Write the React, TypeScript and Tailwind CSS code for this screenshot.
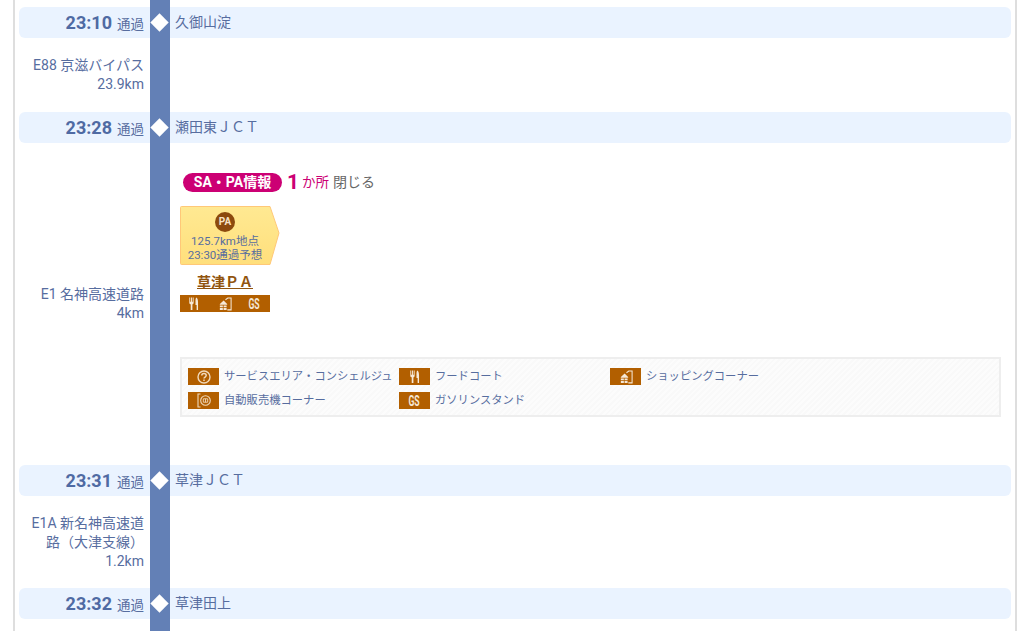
const FONT = 'font-["Roboto","Noto_Sans_CJK_JP",sans-serif]';

function Fork({ x = 0 }: { x?: number }) {
  return (
    <g transform={`translate(${x} 0)`} fill="#f6e9d8">
      <path d="M0 1.500h1v4.500h.8V1.500h1v4.500h.8V1.500h1v5.900c0 .8-.6 1.200-1.300 1.400V15H1.500V8.800C.6 8.600 0 8.200 0 7.400z" />
      <path d="M7.500 1.500c1.300.6 1.800 2.500 1.800 5.500v8H7.800V9.500H6.600V5c0-1.600.3-2.900.9-3.500z" />
    </g>
  );
}

function Shop({ x = 0 }: { x?: number }) {
  return (
    <g transform={`translate(${x} 0)`}>
      <path d="M7.500 4 10 2.200h3.500V14.800H9.500" fill="none" stroke="#f6e9d8" strokeWidth="1.100" />
      <path d="M1.500 8.500 5.500 4.800 9.300 8.500v.9H1.500z" fill="#f6e9d8" />
      <path d="M1.500 10h3.200v2.100H1.500zM5.500 10h3.200v2.100H5.500zM1.500 12.800h3.200V15H1.500zM5.500 12.800h3.200V15H5.500z" fill="#f6e9d8" />
    </g>
  );
}

function BoxIcon({ children }: { children: React.ReactNode }) {
  return (
    <span className="flex h-[17px] w-[31px] shrink-0 items-center justify-center bg-[#b25f00]">
      {children}
    </span>
  );
}

function Gs() {
  return (
    <span className={`${FONT} inline-block scale-x-[0.62] text-[14px] font-bold leading-none text-[#f4e7d6]`}>GS</span>
  );
}

const legend: { label: string; icon: React.ReactNode }[] = [
  {
    label: "サービスエリア・コンシェルジュ",
    icon: (
      <svg width="14" height="14" viewBox="0 0 14 14" fill="none" stroke="#f0d9bb">
        <circle cx="7" cy="7" r="6" strokeWidth="1.400" />
        <path d="M4.800 5.600c0-2.800 4.400-2.800 4.400 0 0 1.500-2.200 1.500-2.200 3" strokeWidth="1.500" />
        <path d="M7 9.400v1.500" strokeWidth="1.500" />
      </svg>
    ),
  },
  {
    label: "フードコート",
    icon: (
      <svg width="10" height="15" viewBox="0 0 10 16">
        <Fork />
      </svg>
    ),
  },
  {
    label: "ショッピングコーナー",
    icon: (
      <svg width="14" height="15" viewBox="0 0 14 16">
        <Shop />
      </svg>
    ),
  },
  {
    label: "自動販売機コーナー",
    icon: (
      <svg width="14" height="15" viewBox="0 0 14 15" fill="none" stroke="#f0d9bb" strokeWidth="1.100">
        <path d="M3.500 1H1v13h2.500" />
        <circle cx="8.500" cy="7.500" r="4.800" />
        <path d="M6.300 5.800h4.400v3.400H6.300zM8.500 5.800v3.400" strokeWidth="0.900" />
      </svg>
    ),
  },
  { label: "ガソリンスタンド", icon: <Gs /> },
];

function Band({ time, name }: { time: string; name: string }) {
  return (
    <div className="flex h-[31.6px] items-center rounded-[6px] bg-[#eaf3ff]">
      <div className="flex w-[125px] shrink-0 items-baseline justify-end text-[#4f6aa3]">
        <span className="text-[18px] font-bold">{time}</span>
        <span className="ml-[5px] text-[13.5px] text-[#576d9f]">通過</span>
      </div>
      <div className="flex w-[32px] shrink-0 justify-center">
        <span className="relative z-[2] ml-[-1px] h-[13px] w-[13px] rotate-45 bg-white" />
      </div>
      <span className="ml-[-1px] text-[14px] text-[#576d9f]">{name}</span>
    </div>
  );
}

function Segment({ lines, className, children }: { lines: string[]; className: string; children?: React.ReactNode }) {
  return (
    <div className={`flex items-center ${className}`}>
      <div className="w-[125px] shrink-0 pt-[1px] text-right text-[14px] leading-[19px] text-[#576d9f]">
        {lines.map((l) => (
          <div key={l}>{l}</div>
        ))}
      </div>
      {children}
    </div>
  );
}

export default function App() {
  return (
    <div className={`${FONT} h-[631px] overflow-hidden bg-white`}>
      <div className="relative ml-[13px] h-full w-[1004px] border-x-2 border-[#dedede] px-[4px] pt-[6.7px]">
        <div className="absolute bottom-0 left-[135px] top-0 z-[1] w-[20px] bg-[#6380b6]" />
        <div className="w-[992px]">
          <Band time="23:10" name="久御山淀" />
          <Segment lines={["E88 京滋バイパス", "23.9km"]} className="h-[73.4px]" />
          <Band time="23:28" name="瀬田東ＪＣＴ" />
          <Segment lines={["E1 名神高速道路", "4km"]} className="h-[321.4px]">
            <div className="ml-[36px] flex h-full w-[821px] flex-col">
              <div className="mt-[28px] flex h-[22px] items-center">
                <span className="ml-[3px] flex h-[19px] w-[99px] items-center justify-center rounded-full bg-[#cc0074] text-[14px] font-bold text-white">
                  SA・PA情報
                </span>
                <span className="ml-[5px] text-[21px] font-bold leading-none text-[#cc0074]">1</span>
                <span className="ml-[3px] text-[13.5px] text-[#cc0074]">か所</span>
                <span className="ml-[4px] text-[14px] text-[#666666]">閉じる</span>
              </div>
              <div className="relative mt-[13px] h-[59px] w-[100px]">
                <svg className="absolute inset-0" width="100" height="59" viewBox="0 0 100 59">
                  <defs>
                    <linearGradient id="card" x1="0" y1="0" x2="0" y2="1">
                      <stop offset="0" stopColor="#ffe992" />
                      <stop offset="1" stopColor="#ffdf7c" />
                    </linearGradient>
                  </defs>
                  <path d="M1.500.5H90L99 27 90 58.500H1.500a1 1 0 0 1-1-1V1.500a1 1 0 0 1 1-1z" fill="url(#card)" stroke="#ffc878" />
                </svg>
                <div className="relative flex h-full w-[90px] flex-col items-center pt-[6px]">
                  <span className="flex h-[20px] w-[20px] items-center justify-center rounded-full bg-[#8c4a0d] text-[10px] font-bold leading-none text-[#f7e3c4]">
                    PA
                  </span>
                  <span className="mt-[2px] whitespace-nowrap text-center text-[11.500px] leading-[14px] text-[#576d9f]">
                    125.7km地点
                    <br />
                    23:30通過予想
                  </span>
                </div>
              </div>
              <a className="mt-[7px] w-[90px] text-center text-[14px] font-bold leading-[20px] text-[#91540f] underline">
                草津ＰＡ
              </a>
              <div className="mt-[3px] flex h-[17px] w-[90px] items-center bg-[#b25f00] pl-[9px]">
                <svg width="10" height="15" viewBox="0 0 10 16">
                  <Fork />
                </svg>
                <svg className="ml-[19px]" width="14" height="15" viewBox="0 0 14 16">
                  <Shop />
                </svg>
                <span className="ml-[13px] flex">
                  <Gs />
                </span>
              </div>
              <div className="mt-[45px] grid h-[60px] w-[821px] grid-cols-[211px_211px_1fr] content-start gap-y-[7px] border-2 border-[#eeeeee] bg-[repeating-linear-gradient(135deg,#fcfcfc_0,#fcfcfc_2px,#f9f9f9_2px,#f9f9f9_4px)] pl-[6px] pt-[9px]">
                {legend.map((item) => (
                  <div key={item.label} className="flex h-[17px] items-center">
                    <BoxIcon>{item.icon}</BoxIcon>
                    <span className="ml-[5px] mt-[1px] whitespace-nowrap text-[11.300px] text-[#576d9f]">{item.label}</span>
                  </div>
                ))}
              </div>
            </div>
          </Segment>
          <Band time="23:31" name="草津ＪＣＴ" />
          <Segment lines={["E1A 新名神高速道", "路（大津支線）", "1.2km"]} className="h-[91.6px]" />
          <Band time="23:32" name="草津田上" />
        </div>
      </div>
    </div>
  );
}
